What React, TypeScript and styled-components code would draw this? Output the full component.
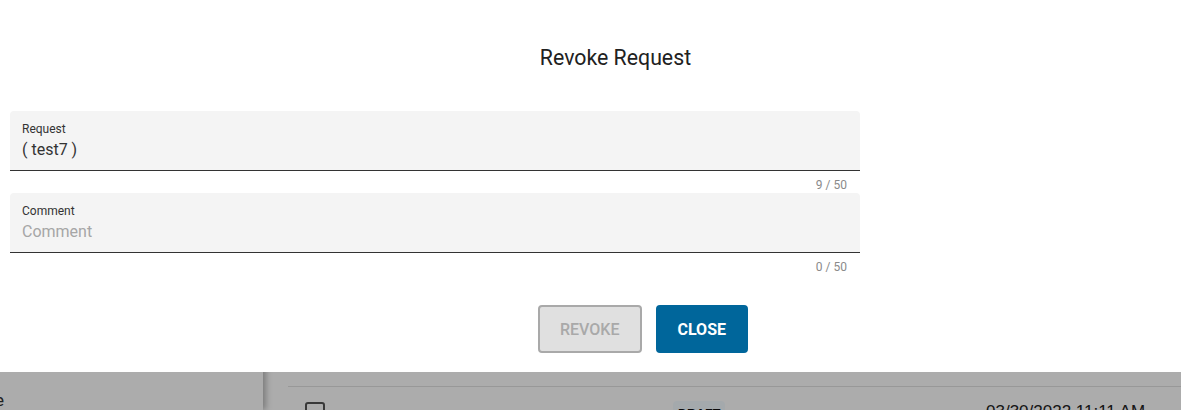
import React from "react";
import styled, { createGlobalStyle } from "styled-components";

const GlobalStyle = createGlobalStyle`
  html, body {
    margin: 0;
    padding: 0;
    height: 100%;
    overflow: hidden;
    background: #ffffff;
  }
  #root {
    height: 100%;
  }
`;

// ---- page behind the dialog ----

const Page = styled.div`
  display: flex;
  height: 100vh;
  font-family: "Liberation Sans", Arial, sans-serif;
  color: #222222;
`;

const Sidebar = styled.aside`
  position: relative;
  z-index: 1;
  flex: 0 0 263px;
  padding-top: 388px;
  background: #ffffff;
  box-shadow: 3px 0 6px rgba(0, 0, 0, 0.28);
  overflow: hidden;
`;

const SideItem = styled.div`
  margin-left: -5px;
  font-family: Roboto, sans-serif;
  font-size: 17px;
  line-height: 24px;
  color: #333333;
`;

const Main = styled.main`
  flex: 1 1 auto;
  padding-left: 25px;
  background: #ffffff;
`;

const ListHeader = styled.div`
  height: 386px;
  border-bottom: 1px solid #e2e2e2;
`;

const Row = styled.div`
  display: grid;
  grid-template-columns: 368px 313px 1fr;
  align-items: start;
  padding: 15px 0 0 17px;
`;

const Checkbox = styled.span`
  display: block;
  width: 16px;
  height: 16px;
  border: 2px solid #555555;
  border-radius: 3px;
`;

const Badge = styled.span`
  justify-self: start;
  margin-top: -1px;
  padding: 5px 5px;
  border-radius: 4px;
  background: #f4fbff;
  font-size: 12.5px;
  font-weight: 700;
  line-height: 16px;
  color: #111111;
`;

const DateText = styled.span`
  margin-top: 0;
  font-size: 17px;
  line-height: 19px;
  color: #222222;
`;

// ---- dialog ----

const Scrim = styled.div`
  position: fixed;
  inset: 0;
  z-index: 10;
  background: rgba(0, 0, 0, 0.325);
`;

const Dialog = styled.section`
  position: fixed;
  top: 0;
  left: 0;
  right: 0;
  z-index: 11;
  height: 372px;
  box-sizing: border-box;
  padding-top: 42px;
  background: #ffffff;
  font-family: Roboto, "Liberation Sans", sans-serif;
`;

const Title = styled.h2`
  margin: 0 0 37px;
  padding-left: 50px;
  text-align: center;
  font-size: 21.3px;
  font-weight: 400;
  line-height: 32px;
  color: #212121;
`;

const FieldWrap = styled.div`
  width: 850px;
  margin-left: 10px;
`;

const FieldBox = styled.label`
  display: flex;
  flex-direction: column;
  height: 60px;
  box-sizing: border-box;
  padding: 10px 12px 9px;
  border-radius: 4px 4px 0 0;
  border-bottom: 1px solid #333333;
  background: #f4f4f4;
`;

const FieldLabel = styled.span`
  font-size: 12px;
  line-height: 16px;
  color: #333333;
`;

const FieldInput = styled.input`
  height: 24px;
  margin-top: 1px;
  padding: 0;
  border: none;
  outline: none;
  background: transparent;
  font-family: inherit;
  font-size: 16px;
  line-height: 24px;
  color: #333333;

  &::placeholder {
    color: #a6a6a6;
  }
`;

const Helper = styled.div`
  height: 22px;
  box-sizing: border-box;
  padding: 6px 13px 0 0;
  text-align: right;
  font-size: 12px;
  line-height: 16px;
  color: #8a8a8a;
`;

const Actions = styled.div`
  display: flex;
  justify-content: center;
  gap: 14px;
  margin-top: 30px;
  padding-left: 105px;
`;

const Button = styled.button<{ $primary?: boolean }>`
  height: 48px;
  padding: 0 20px;
  border-radius: 4px;
  border: 2px solid ${(p) => (p.$primary ? "#00669b" : "#a9a9a9")};
  background: ${(p) => (p.$primary ? "#00669b" : "#e0e0e0")};
  color: ${(p) => (p.$primary ? "#ffffff" : "#a9a9a9")};
  font-family: inherit;
  font-size: 16px;
  font-weight: ${(p) => (p.$primary ? 700 : 500)};
  text-transform: uppercase;
  cursor: ${(p) => (p.$primary ? "pointer" : "default")};
`;

interface FieldProps {
  label: string;
  value?: string;
  placeholder?: string;
  max: number;
}

const Field: React.FC<FieldProps> = ({ label, value, placeholder, max }) => (
  <FieldWrap>
    <FieldBox>
      <FieldLabel>{label}</FieldLabel>
      <FieldInput
        defaultValue={value}
        placeholder={placeholder}
        maxLength={max}
        readOnly={!!value}
      />
    </FieldBox>
    <Helper>{`${value ? value.length : 0} / ${max}`}</Helper>
  </FieldWrap>
);

const App: React.FC = () => {
  return (
    <>
      <GlobalStyle />
      <Page>
        <Sidebar>
          <SideItem>e</SideItem>
        </Sidebar>
        <Main>
          <ListHeader />
          <Row>
            <Checkbox />
            <Badge>DRAFT</Badge>
            <DateText>03/30/2022 11:11 AM</DateText>
          </Row>
        </Main>
      </Page>
      <Scrim />
      <Dialog role="dialog" aria-label="Revoke Request">
        <Title>Revoke Request</Title>
        <Field label="Request" value="( test7 )" max={50} />
        <Field label="Comment" placeholder="Comment" max={50} />
        <Actions>
          <Button disabled>Revoke</Button>
          <Button $primary>Close</Button>
        </Actions>
      </Dialog>
    </>
  );
};

export default App;
